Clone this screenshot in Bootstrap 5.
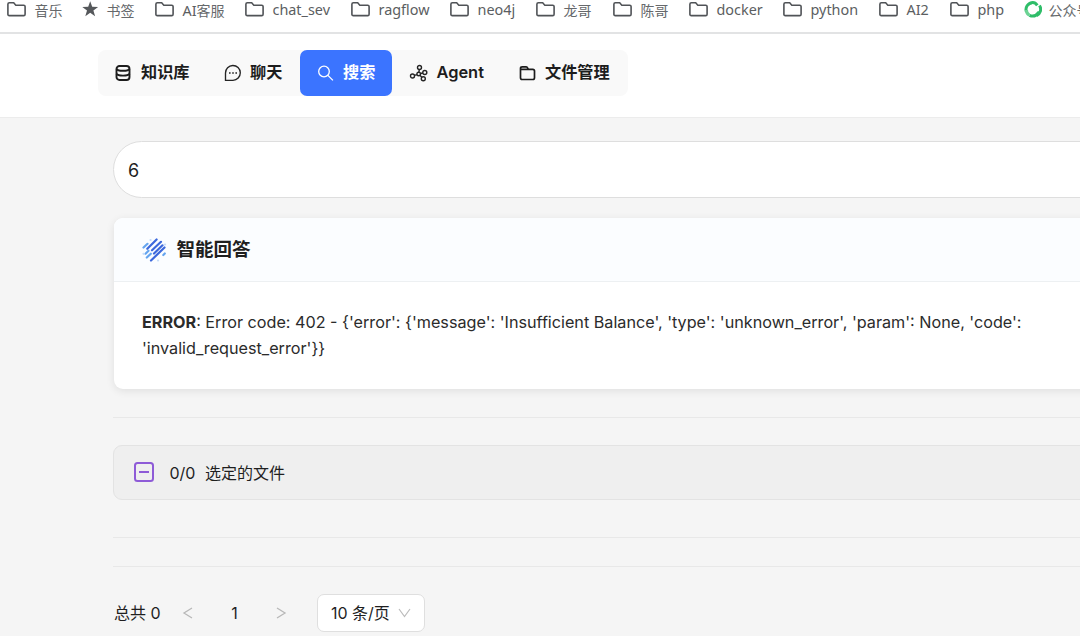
<!DOCTYPE html>
<html lang="zh-CN">
<head>
<meta charset="utf-8">
<title>搜索</title>
<link href="https://cdn.jsdelivr.net/npm/bootstrap@5.3.0/dist/css/bootstrap.min.css" rel="stylesheet">
<style>
body{font-family:Inter,"Noto Sans CJK SC",sans-serif;font-size:16px;color:#1f1f1f;background:#f5f5f5;height:636px;overflow:hidden}
svg{display:block;flex:none}
.bookmarks{display:grid;grid-template-columns:75px 73px 90px 106px 99px 86px 77px 76px 94px 96px 71px 74px 80px;height:34px;padding-left:7px;border-bottom:2px solid #e2e3e4;background:#fff;font:14.4px/20px "Noto Sans","Noto Sans CJK SC",sans-serif;color:#5b5e61;overflow:hidden}
.bookmarks .bm{display:flex;height:20px;white-space:nowrap}
.bookmarks .bm svg{margin-right:7.500px}
.bookmarks .zh{font-family:"Noto Sans CJK SC",sans-serif;font-size:14px;color:#66696c}
.topbar{height:84px;background:#fff;border-bottom:1px solid #ececec;padding:16px 0 0 98px}
.tabs{width:530px;height:46px;background:#f9f9f9;border-radius:8px;font-weight:600}
.tabs .tab{height:46px;display:flex;align-items:center;padding-left:17px;color:#1d1d1d;text-decoration:none;white-space:nowrap}
.tabs .tab svg{margin-right:10px}
.tabs .tab span{padding-bottom:2px}
.tabs .zh{font-weight:700;font-size:16.200px}
.tabs .active-tab{background:#3b74ff;color:#fff;border-radius:7px}
.main{padding:23px 0 0 113px;width:1130px}
.query{height:57px;border:1px solid #dedede;border-radius:29px;background:#fff;padding:1px 0 0 14px;font-size:18px}
.answer{margin-top:20px;margin-left:1px;height:171px;border:0;border-radius:9px;box-shadow:0 2px 8px rgba(0,0,0,.09);background:#fff}
.answer .card-header{height:65px;background:#fbfdff;border-bottom:1px solid #edf0f2;border-radius:9px 9px 0 0;padding:1px 27px 0;font-size:18.500px;font-weight:700}
.answer .card-body{padding:28px 28px;line-height:25.500px;color:#2b2b2b;font-size:16.180px;white-space:nowrap}
.rule{height:1px;background:#e8e8e8}
.files{margin:27px 0 37px;height:55px;border:1px solid #e3e3e3;border-radius:9px;background:#efefef;padding-left:20px}
.pager{margin-top:27px;height:38px;padding-left:1px}
.pager .pick{width:108px;height:38px;border:1px solid #dfdfdf;border-radius:7px;background:#fff;padding-left:13px}
</style>
</head>
<body>
<svg width="0" height="0" class="position-absolute"><defs>
<symbol id="folder" viewBox="0 0 20 20"><path d="M.9 4.3q0-1.500 1.500-1.500h4.300l2.100 2.400h7.900q1.400 0 1.400 1.400v7.600q0 1.400-1.400 1.400H2.300q-1.400 0-1.400-1.400z" fill="none" stroke="#505357" stroke-width="1.600"/></symbol>
</defs></svg>
<nav class="bookmarks">
<div class="bm"><svg width="20" height="20"><use href="#folder"/></svg><span class="zh">音乐</span></div>
<div class="bm"><svg width="17" height="20" viewBox="0 0 17 20"><path d="M8.200 1.200l2 5.500 5.900.2-4.700 3.600 1.700 5.700-4.900-3.400-4.900 3.400L5 10.500.300 6.900l5.900-.200z" fill="#55585b"/></svg><span class="zh">书签</span></div>
<div class="bm"><svg width="20" height="20"><use href="#folder"/></svg><span>AI<span class="zh">客服</span></span></div>
<div class="bm"><svg width="20" height="20"><use href="#folder"/></svg><span>chat_sev</span></div>
<div class="bm"><svg width="20" height="20"><use href="#folder"/></svg><span>ragflow</span></div>
<div class="bm"><svg width="20" height="20"><use href="#folder"/></svg><span>neo4j</span></div>
<div class="bm"><svg width="20" height="20"><use href="#folder"/></svg><span class="zh">龙哥</span></div>
<div class="bm"><svg width="20" height="20"><use href="#folder"/></svg><span class="zh">陈哥</span></div>
<div class="bm"><svg width="20" height="20"><use href="#folder"/></svg><span>docker</span></div>
<div class="bm"><svg width="20" height="20"><use href="#folder"/></svg><span>python</span></div>
<div class="bm"><svg width="20" height="20"><use href="#folder"/></svg><span>AI2</span></div>
<div class="bm"><svg width="20" height="20"><use href="#folder"/></svg><span>php</span></div>
<div class="bm"><svg width="18" height="20" viewBox="0 0 18 20" fill="none" stroke="#2fbd69" stroke-width="3"><path d="M2.500 12A6.800 6.800 0 0 1 8.500 2.700M6 3.200Q10.500 1.300 13.300 5.300M15.500 5.500A6.800 6.800 0 0 1 12.500 15.500M15.200 12Q11 17.800 5.500 15.300"/><path d="M5.500 15.300Q2.300 13.500 2.500 10" stroke="#6bd394"/></svg><span class="zh" style="margin-left:-1px">公众号</span></div>
</nav>
<header class="topbar">
<div class="tabs d-flex">
<a class="tab" style="width:109px"><svg width="16" height="18" viewBox="0 0 16 18" fill="none" stroke="#1d1d1d" stroke-width="1.900"><rect x="1.500" y="2" width="13" height="14" rx="3"/><path d="M1.500 5q1 1.800 6.500 1.800T14.500 5M1.500 9.800q1 1.800 6.500 1.800t6.500-1.800"/></svg><span class="zh">知识库</span></a>
<a class="tab" style="width:93px"><svg width="18" height="18" viewBox="0 0 18 18" fill="none" stroke="#252525" stroke-width="1.350"><path d="M1.500 16.300V9A7.400 7.400 0 1 1 9 16.300z"/><path d="M5 9h1.600M8.200 9h1.600M11.400 9H13" stroke-width="1.600"/></svg><span class="zh" style="margin-left:-2px">聊天</span></a>
<a class="tab active-tab" style="width:92px"><svg width="17" height="18" viewBox="0 0 17 18" fill="none" stroke="#fff" stroke-width="1.300"><circle cx="7" cy="7.500" r="5.300"/><path d="M10.900 11.400l5 5"/></svg><span class="zh" style="margin-left:-1px">搜索</span></a>
<a class="tab" style="width:110px"><svg width="19" height="18" viewBox="0 0 19 18" fill="none" stroke="#252525" stroke-width="1.400"><circle cx="10.500" cy="3.500" r="2"/><circle cx="3.500" cy="12" r="2"/><circle cx="9.700" cy="10" r="1.800"/><circle cx="15.800" cy="8.500" r="2"/><circle cx="14.300" cy="14.800" r="2"/><path d="M10.300 5.500l-.4 2.700M5.500 11.400l2.400-.8M11.500 9.500l2.400-.5M11 11.200l1.900 2.200"/></svg><span style="margin-left:-1.500px;font-size:16.400px">Agent</span></a>
<a class="tab"><svg width="17" height="18" viewBox="0 0 17 18" fill="none" stroke="#1d1d1d" stroke-width="1.700"><path d="M1.500 4.500q0-1.700 1.700-1.700h4q1 0 1.400 1l.7 1.500h4.500q1.700 0 1.700 1.700v6.800q0 1.700-1.700 1.700H3.200q-1.700 0-1.700-1.700zM1.500 5.300h8.500"/></svg><span class="zh" style="margin-left:-1px">文件管理</span></a>
</div>
</header>
<main class="main">
<div class="query d-flex align-items-center">6</div>
<section class="card answer">
<div class="card-header d-flex align-items-center"><svg class="me-2" width="27" height="26" viewBox="0 0 27 26" fill="none" stroke-linecap="round" stroke-width="2.200"><g stroke="#3c68dc"><path d="M6.300 11.800l9.300-9.300M11 13.300l9-8.500M13 16.500l8.500-8.200M10 23.500l13.500-13"/></g><g stroke="#65a5ef"><path d="M2.500 10.500l4-3.700M4.500 16.700l3-3M5.800 20.500l4-3.800M22.300 18l1.500-1.500"/></g><g stroke="#c6dcf8"><path d="M9.500 3h.1M2.500 16.800h.1M17 23.500h.1M24 7.500h.1"/></g></svg><span style="margin-left:.500px">智能回答</span></div>
<div class="card-body"><b class="fw-bold">ERROR</b>: Error code: 402 - {'error': {'message': 'Insufficient Balance', 'type': 'unknown_error', 'param': None, 'code':<br>'invalid_request_error'}}</div>
</section>
<div class="rule" style="margin-top:28px"></div>
<div class="files d-flex align-items-center"><svg width="21" height="21" viewBox="0 0 21 21" fill="none" stroke="#8e5bd7" stroke-width="2"><rect x="1" y="1" width="18" height="18" rx="2.500"/><path d="M5 10h10"/></svg><span style="margin-left:14.500px">0/0</span><span style="margin-left:9.500px">选定的文件</span></div>
<div class="rule"></div>
<div class="rule" style="margin-top:28px"></div>
<div class="pager d-flex align-items-center">
<span style="width:68px">总共 0</span>
<svg width="12" height="14" viewBox="0 0 12 14" fill="none" stroke="#b8b8b8" stroke-width="1.300"><path d="M10 2L2 7l8 5"/></svg>
<span class="text-center" style="width:81px">1</span>
<svg width="12" height="14" viewBox="0 0 12 14" fill="none" stroke="#b8b8b8" stroke-width="1.300"><path d="M2 2l8 5-8 5"/></svg>
<div class="pick d-flex align-items-center" style="margin-left:30px"><span>10 条/页</span><svg style="margin-left:8px" width="13" height="12" viewBox="0 0 13 12" fill="none" stroke="#bcbcbc" stroke-width="1.200"><path d="M1 2l5.500 7.500L12 2"/></svg></div>
</div>
</main>
<script src="https://cdn.jsdelivr.net/npm/bootstrap@5.3.0/dist/js/bootstrap.bundle.min.js"></script>
</body>
</html>
